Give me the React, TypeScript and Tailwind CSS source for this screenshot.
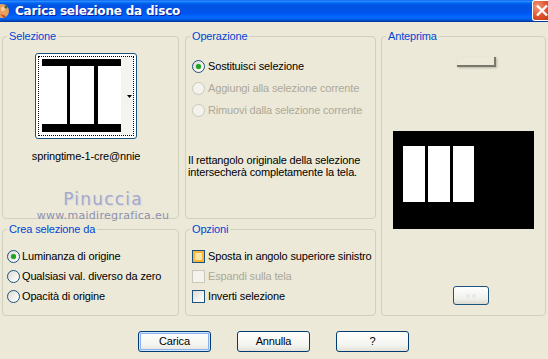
import React from "react";

function Radio({ checked = false, disabled = false }: { checked?: boolean; disabled?: boolean }) {
  return (
    <span
      className={`w-[13px] h-[13px] shrink-0 rounded-full border flex items-center justify-center ${
        disabled
          ? "border-[#CAC8BB] bg-[#F3F2EC]"
          : "border-[#1C5180] bg-[linear-gradient(135deg,#DCD9D0,#F4F3EE_60%,#FFFFFF)]"
      }`}
    >
      {checked && <span className="w-[5px] h-[5px] rounded-full bg-[#21A121] shadow-[0_0_1px_#5BC95B]" />}
    </span>
  );
}

function Check({ hover = false, disabled = false }: { hover?: boolean; disabled?: boolean }) {
  return (
    <span
      className={`w-[13px] h-[13px] shrink-0 border ${
        disabled
          ? "border-[#CAC8BB] bg-[#F3F2EC]"
          : hover
          ? "border-[#1C5180] bg-[#FBE3A6] shadow-[inset_0_0_0_2px_#F8B636]"
          : "border-[#1C5180] bg-[linear-gradient(135deg,#DCD9D0,#F4F3EE_60%,#FFFFFF)]"
      }`}
    />
  );
}

function Group({
  label,
  className = "",
  children,
}: {
  label: string;
  className?: string;
  children?: React.ReactNode;
}) {
  return (
    <fieldset className={`border border-[#D0D0BF] rounded-[4px] ${className}`}>
      <legend className="ml-[4px] px-[2px] text-[#0046D5] leading-[12px]">{label}</legend>
      {children}
    </fieldset>
  );
}

function Btn({ children, focused = false }: { children: React.ReactNode; focused?: boolean }) {
  return (
    <div
      className={`w-[73px] h-[21px] rounded-[3px] border border-[#003C74] flex items-center justify-center text-black bg-[linear-gradient(to_bottom,#FFFFFF,#F3F3EF_70%,#E3E1D8)] ${
        focused ? "shadow-[inset_0_0_0_1px_#CEE7FF,inset_0_0_0_2px_#8FB0EE]" : ""
      }`}
    >
      {children}
    </div>
  );
}

export default function App() {
  return (
    <div className="w-[548px] h-[359px] bg-[#ECE9D8] flex flex-col overflow-hidden font-['Liberation_Sans',Arial,sans-serif] text-[11px] tracking-[-0.15px] text-black">
      {/* Title bar */}
      <div className="h-[22px] shrink-0 flex items-center bg-[linear-gradient(to_bottom,#0058EE_0%,#3593FF_5%,#127DFF_9%,#0262EE_15%,#0054E3_25%,#0055EB_56%,#005BF5_66%,#026AFE_76%,#0062EF_86%,#0052D6_92%,#0040AB_96%,#003092_100%)]">
        <svg width="11" height="16" viewBox="0 0 11 16" className="shrink-0">
          <circle cx="2" cy="8" r="7" fill="#E8A060" />
          <circle cx="3" cy="6" r="2" fill="#F6D2A0" />
          <path d="M0 11 L6 13 L4 15 Z" fill="#C04A20" />
          <circle cx="6" cy="4" r="1.5" fill="#3A6A30" />
        </svg>
        <span className="ml-[4px] font-['DejaVu_Sans',sans-serif] font-bold text-[12px] text-white tracking-[-0.2px] [text-shadow:1px_1px_0_#0A1E9B]">
          Carica selezione da disco
        </span>
        <div className="ml-auto mt-[-2px] w-[16px] h-[21px] rounded-l-[3px] border border-r-0 border-white bg-[radial-gradient(circle_at_30%_30%,#F09A7C,#E0552E_55%,#C23A12)] flex items-center justify-start pl-[2px] overflow-hidden">
          <svg width="14" height="13" viewBox="0 0 14 13" className="shrink-0">
            <path d="M2 1.5 L12 11.5 M12 1.5 L2 11.5" stroke="white" strokeWidth="2.4" />
          </svg>
        </div>
      </div>

      {/* Content */}
      <div className="flex pl-[2px] pt-[8px]">
        {/* Left column */}
        <div className="w-[177px] flex flex-col gap-[4px] relative">
          <Group label="Selezione" className="h-[189px]">
            <div className="flex flex-col items-center w-[104px] ml-[31px] mt-[11px]">
              <div className="w-[102px] h-[86px] rounded-[3px] border border-[#1C5180] bg-white p-[2px]">
                <div className="w-full h-full border border-dotted border-black flex">
                  <div className="w-[82px] h-full flex flex-col pl-[3px] pt-[2px] pb-[3px]">
                    <div className="h-[7px] bg-black" />
                    <div className="flex-1 flex">
                      <div className="w-[25px]" />
                      <div className="w-[3px] bg-black" />
                      <div className="w-[24px]" />
                      <div className="w-[4px] bg-black" />
                      <div className="flex-1" />
                    </div>
                    <div className="h-[8px] bg-black" />
                  </div>
                  <div className="flex-1 bg-[#F3F3F0] flex items-center justify-end pr-[1px]">
                    <svg width="5" height="3" viewBox="0 0 5 3">
                      <path d="M0 0 H5 L2.5 3 Z" fill="black" />
                    </svg>
                  </div>
                </div>
              </div>
              <div className="mt-[11px] whitespace-nowrap leading-[12px]">springtime-1-cre@nnie</div>
            </div>
          </Group>
          <Group label="Crea selezione da" className="h-[93px]">
            <div className="flex flex-col gap-[7px] mt-[15px] pl-[4px]">
              <div className="flex items-center gap-[2px] leading-[13px]">
                <Radio checked />
                <span>Luminanza di origine</span>
              </div>
              <div className="flex items-center gap-[2px] leading-[13px]">
                <Radio />
                <span>Qualsiasi val. diverso da zero</span>
              </div>
              <div className="flex items-center gap-[2px] leading-[13px]">
                <Radio />
                <span>Opacità di origine</span>
              </div>
            </div>
          </Group>
          {/* watermark */}
          <div className="absolute left-[36px] top-[162px] w-[130px] flex flex-col items-center gap-[3px] pointer-events-none">
            <span className="font-['DejaVu_Sans',sans-serif] text-[17px] leading-[15px] text-[#A7A9C6] tracking-[1.2px] [text-shadow:1px_1px_0_#D8D8E8]">
              Pinuccia
            </span>
            <span className="font-['DejaVu_Sans',sans-serif] text-[11px] leading-[11px] text-[#8E90B0] tracking-[0.3px]">
              www.maidiregrafica.eu
            </span>
          </div>
        </div>

        {/* Middle column */}
        <div className="w-[191px] ml-[6px] flex flex-col gap-[4px]">
          <Group label="Operazione" className="h-[189px]">
            <div className="flex flex-col gap-[9px] mt-[18px] pl-[6px]">
              <div className="flex items-center gap-[3px] leading-[13px]">
                <Radio checked />
                <span>Sostituisci selezione</span>
              </div>
              <div className="flex items-center gap-[3px] leading-[13px] text-[#ACA899]">
                <Radio disabled />
                <span>Aggiungi alla selezione corrente</span>
              </div>
              <div className="flex items-center gap-[3px] leading-[13px] text-[#ACA899]">
                <Radio disabled />
                <span>Rimuovi dalla selezione corrente</span>
              </div>
            </div>
            <p className="mt-[37px] pl-[2px] leading-[12px]">
              Il rettangolo originale della selezione
              <br />
              intersecherà completamente la tela.
            </p>
          </Group>
          <Group label="Opzioni" className="h-[93px]">
            <div className="flex flex-col gap-[7px] mt-[15px] pl-[6px]">
              <div className="flex items-center gap-[3px] leading-[13px] whitespace-nowrap">
                <Check hover />
                <span>Sposta in angolo superiore sinistro</span>
              </div>
              <div className="flex items-center gap-[3px] leading-[13px] text-[#ACA899]">
                <Check disabled />
                <span>Espandi sulla tela</span>
              </div>
              <div className="flex items-center gap-[3px] leading-[13px]">
                <Check />
                <span>Inverti selezione</span>
              </div>
            </div>
          </Group>
        </div>

        {/* Right column */}
        <Group label="Anteprima" className="w-[165px] h-[286px] ml-[5px]">
          <div className="flex flex-col">
            <div className="ml-[75px] mt-[15px] w-[39px] h-[10px] border-r-2 border-b-2 border-[#77776A] shadow-[1px_1px_2px_#B8B6A8]" />
            <div className="ml-[11px] mt-[64px] w-[141px] h-[98px] bg-black flex pl-[10px] pt-[15px] gap-[3px]">
              <div className="w-[22px] h-[56px] bg-white" />
              <div className="w-[22px] h-[56px] bg-white" />
              <div className="w-[21px] h-[56px] bg-white" />
            </div>
            <div className="ml-[71px] mt-[57px] w-[36px] h-[19px] rounded-[3px] border border-[#1C5180] bg-[linear-gradient(to_bottom,#FFFFFF,#F0F0EA_70%,#DCDAD0)] flex items-center justify-center gap-[2px]">
              <span className="w-[4px] h-[4px] rounded-full bg-[#E6E6EE]" />
              <span className="w-[4px] h-[4px] rounded-full bg-[#E6E6EE]" />
            </div>
          </div>
        </Group>
      </div>

      {/* Buttons */}
      <div className="flex pl-[138px] gap-[26px] mt-[15px]">
        <Btn focused>Carica</Btn>
        <Btn>Annulla</Btn>
        <Btn>?</Btn>
      </div>
    </div>
  );
}
